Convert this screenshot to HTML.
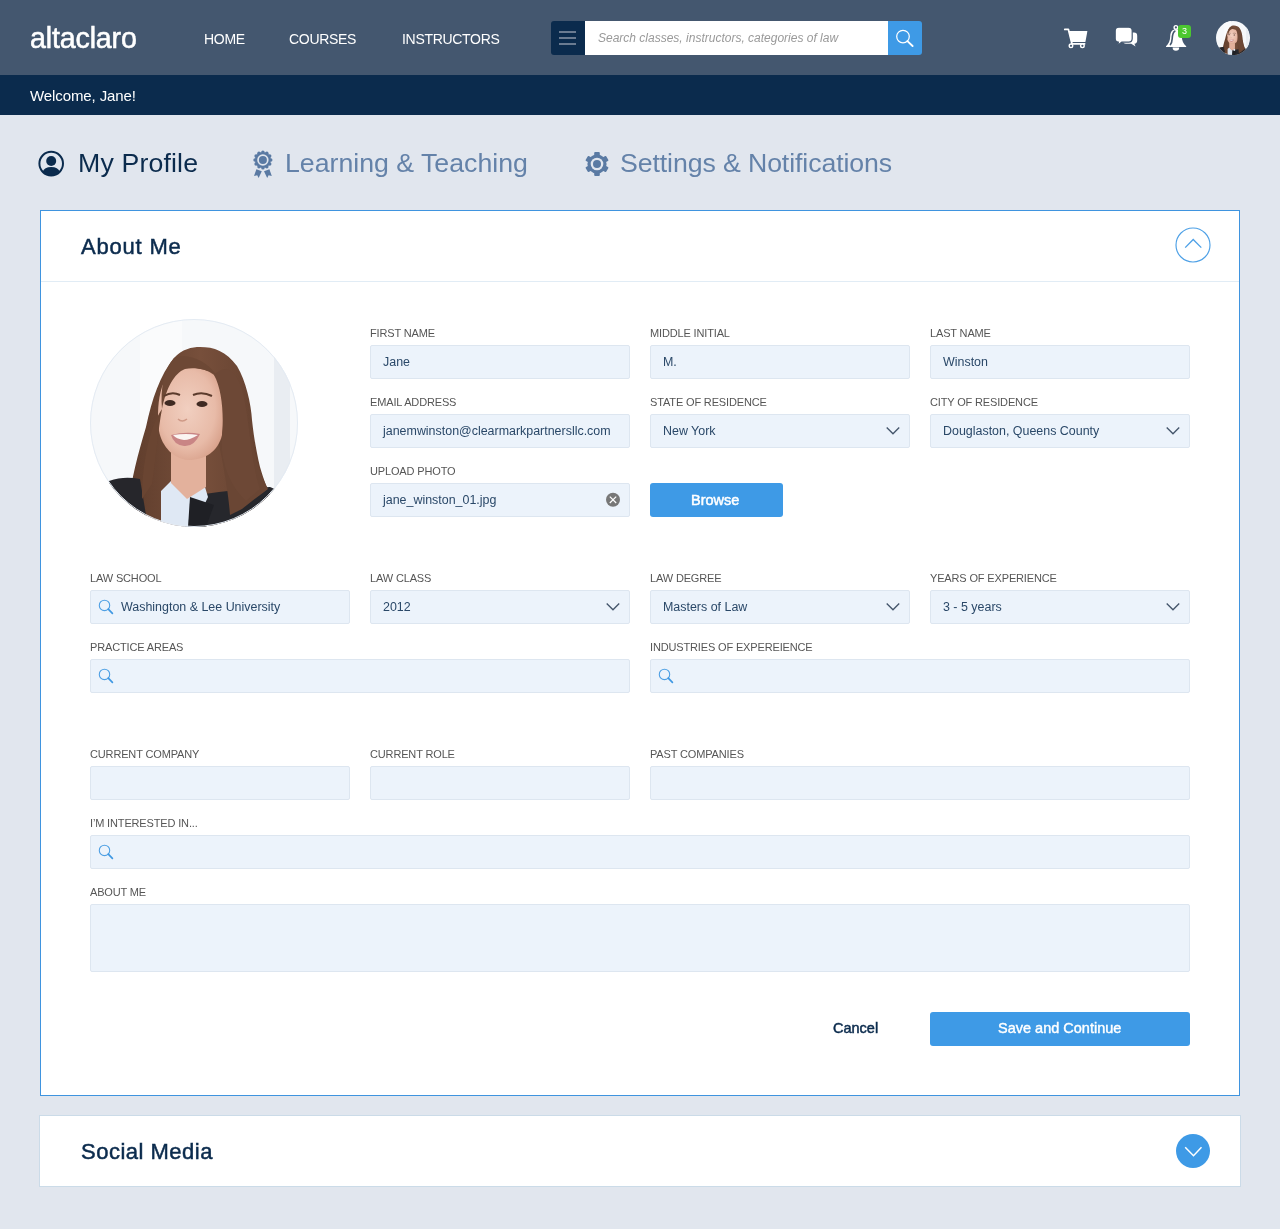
<!DOCTYPE html>
<html><head><meta charset="utf-8"><title>altaclaro - My Profile</title>
<style>
html,body{margin:0;padding:0;}
body{width:1280px;height:1229px;background:#e1e6ee;position:relative;overflow:hidden;font-family:'Liberation Sans', sans-serif;}
.t{position:absolute;will-change:transform;line-height:1;white-space:nowrap;font-family:'Liberation Sans', sans-serif;}
.r{position:absolute;display:block;}
</style></head><body>
<div class="r" style="left:0px;top:0px;width:1280px;height:75px;background:#44576f"></div>
<div class="r" style="left:0px;top:75px;width:1280px;height:40px;background:#0b2b4d"></div>
<div class="t" style="left:30px;top:23.69px;font-size:28.6px;color:#fff;font-weight:normal;letter-spacing:-0.15px;-webkit-text-stroke:0.55px #fff">altaclaro</div>
<div class="t" style="left:203.5px;top:32.10px;font-size:14px;color:#fff;font-weight:normal;letter-spacing:-0.3px">HOME</div>
<div class="t" style="left:289px;top:32.10px;font-size:14px;color:#fff;font-weight:normal;letter-spacing:-0.3px">COURSES</div>
<div class="t" style="left:401.5px;top:32.10px;font-size:14px;color:#fff;font-weight:normal;letter-spacing:-0.3px">INSTRUCTORS</div>
<div class="t" style="left:30px;top:88.05px;font-size:15px;color:#fff;font-weight:normal;letter-spacing:-0.1px">Welcome, Jane!</div>
<div class="r" style="left:551px;top:21px;width:34px;height:34px;background:#0b2b4d;border-radius:3px 0 0 3px"></div>
<div class="r" style="left:559px;top:31px;width:17px;height:2px;background:#6a7b91"></div>
<div class="r" style="left:559px;top:37px;width:17px;height:2px;background:#6a7b91"></div>
<div class="r" style="left:559px;top:43px;width:17px;height:2px;background:#6a7b91"></div>
<div class="r" style="left:585px;top:21px;width:303px;height:34px;background:#fff"></div>
<div class="t" style="left:598px;top:32.20px;font-size:12px;color:#999999;font-weight:normal;font-style:italic">Search classes, instructors, categories of law</div>
<div class="r" style="left:888px;top:21px;width:34px;height:34px;background:#3e9ae6;border-radius:0 3px 3px 0"></div>
<svg class="r" style="left:888px;top:21px;" width="34" height="34" viewBox="0 0 34 34"><circle cx="15" cy="15.6" r="6.3" fill="none" stroke="#fff" stroke-width="1.25"/><line x1="19.4" y1="20.1" x2="24.6" y2="25" stroke="#fff" stroke-width="1.9" stroke-linecap="round"/></svg>
<svg class="r" style="left:0px;top:0px;" width="1280" height="75" viewBox="0 0 1280 75">
<path d="M1064.8 29.4 H1068.4 L1072 43.8 H1084.6" fill="none" stroke="#fff" stroke-width="1.8" stroke-linejoin="round" stroke-linecap="round"/>
<path d="M1068.6 31 H1087.4 L1085.4 42 H1071.2 Z" fill="#fff"/>
<circle cx="1071" cy="45.8" r="1.8" fill="#44576f" stroke="#fff" stroke-width="1.4"/>
<circle cx="1082.4" cy="45.8" r="1.8" fill="#44576f" stroke="#fff" stroke-width="1.4"/>
<path d="M1127.5 32.5 H1134 Q1137.2 32.5 1137.2 35.7 V40.5 Q1137.2 43.5 1134.4 43.7 L1135.6 46.6 L1131.2 43.8 H1126 Q1123 43.8 1123 40.8 V35.7 Q1123 32.5 1126.2 32.5 Z" fill="#fff"/>
<path d="M1118.8 27.2 H1128.6 Q1132.2 27.2 1132.2 30.8 V38.6 Q1132.2 42.2 1128.6 42.2 H1121.8 L1117.6 45.2 L1118.4 42.2 Q1115.2 42 1115.2 38.6 V30.8 Q1115.2 27.2 1118.8 27.2 Z" fill="#fff" stroke="#44576f" stroke-width="1.2"/>
<circle cx="1175.9" cy="27.4" r="1.8" fill="none" stroke="#fff" stroke-width="1.4"/>
<path d="M1175.9 29.2 C1171.4 29.4 1170.4 32.5 1170.2 36.5 C1170 41 1168.8 43.6 1166 46.3 L1166 47 H1186.2 V46.3 C1183.2 43.6 1182 41 1181.8 36.5 C1181.6 32.5 1180.4 29.4 1175.9 29.2 Z" fill="#fff"/>
<path d="M1172.6 47.4 A3.3 3.3 0 0 0 1179.2 47.4 Z" fill="#fff"/>
<path d="M1174.8 31.2 C1172.8 32.2 1172.4 35 1172.2 38.6 C1172 41.6 1171.4 43.4 1170.4 44.6" fill="none" stroke="#44576f" stroke-width="1.6" stroke-linecap="round"/>
</svg>
<div class="r" style="left:1178px;top:25px;width:13px;height:13px;background:#4cc730;border-radius:3px"></div>
<div class="t" style="left:1182px;top:26.75px;font-size:9px;color:#fff;font-weight:normal;">3</div>
<svg class="r" style="left:1216px;top:21px" width="34" height="34" viewBox="0 0 208 208"><defs><clipPath id="ca"><circle cx="104" cy="104" r="104"/></clipPath></defs><g clip-path="url(#ca)"><defs><linearGradient id="hg" x1="0" y1="0" x2="1" y2="0"><stop offset="0" stop-color="#5f3d2c"/><stop offset="0.5" stop-color="#774f3b"/><stop offset="1" stop-color="#62402f"/></linearGradient>
<radialGradient id="sk" cx="0.45" cy="0.45" r="0.6"><stop offset="0" stop-color="#f1cfc0"/><stop offset="0.7" stop-color="#e8bba8"/><stop offset="1" stop-color="#d9a28c"/></radialGradient></defs>
<rect width="208" height="208" fill="#f6f8fa"/>
<rect x="50" y="0" width="42" height="208" fill="#fafbfc"/>
<rect x="184" y="0" width="16" height="208" fill="#e9edf2"/>
<path d="M39 208 L39 186 C41 160 48 135 56 108 C62 80 70 56 84 39 C92 30 102 28 110 28 C124 28 136 32 147 47 C156 62 161 85 162 101 C164 120 167 135 170 148 C174 162 178 172 182 178 L176 208 Z" fill="url(#hg)"/>
<path d="M19 162 C30 158 40 158 50 160 L58 208 L19 208 Z" fill="#26262b"/>
<path d="M95 178 C120 174 150 170 180 168 C190 172 198 180 208 190 L208 208 L95 208 Z" fill="#26272c"/>
<path d="M71 172 L81 162 L96 178 L115 168 L118 178 L104 208 L71 208 Z" fill="#dfe8f4"/>
<path d="M100 178 L124 186 L116 208 L98 208 Z" fill="#1f2025"/>
<path d="M128 120 C134 150 138 170 140 196 L152 190 C162 182 170 176 178 170 C170 155 166 140 162 120 Z" fill="#6a4634"/>
<path d="M81 128 L116 128 L116 168 L97 180 L81 164 Z" fill="#e3b19c"/>
<path d="M95 49 C110 48 126 52 131 66 C135 80 134 100 132 116 C128 132 116 141 98 141 C84 140 72 128 69 112 C67 96 68 80 72 68 C76 56 84 50 95 49 Z" fill="url(#sk)"/>
<path d="M84 39 C96 34 116 40 126 56 C118 50 104 48 95 50 C84 54 76 70 72 90 C70 70 74 50 84 39 Z" fill="#6d4835"/>
<path d="M124 56 C132 70 134 95 132 118 C130 140 138 165 156 182 L170 170 C160 140 160 100 152 70 C146 52 136 44 124 56 Z" fill="#6d4836"/>
<path d="M72 90 C68 110 66 140 62 165 L52 180 C52 150 58 110 72 90 Z" fill="#6a4532"/>
<path d="M74 77 Q82 72 90 76" fill="none" stroke="#5b3b2c" stroke-width="2"/><path d="M103 76 Q112 72 122 77" fill="none" stroke="#5b3b2c" stroke-width="2"/>
<ellipse cx="80" cy="84" rx="5.5" ry="3" fill="#3f2a22"/><ellipse cx="112" cy="85" rx="5.5" ry="3" fill="#3f2a22"/>
<path d="M88 100 Q92 104 97 100" fill="none" stroke="#cf9a87" stroke-width="1.5"/>
<path d="M81 116 Q96 112 110 115 Q104 128 94 127 Q84 126 81 116 Z" fill="#c98585"/>
<path d="M83 116 Q96 114 108 116 Q100 121 94 121 Q86 120 83 116 Z" fill="#fbf5f2"/></g></svg>
<svg class="r" style="left:37px;top:150px;" width="28" height="28" viewBox="0 0 28 28"><circle cx="14.2" cy="13.6" r="11.8" fill="none" stroke="#0b2b4d" stroke-width="2"/><circle cx="14.2" cy="11" r="5" fill="#0b2b4d"/><path d="M5.6 21.8 C6.8 18.4 9.6 16.9 14.2 16.9 C18.8 16.9 21.6 18.4 22.8 21.8 C20.6 24.2 17.6 25.4 14.2 25.4 C10.8 25.4 7.8 24.2 5.6 21.8 Z" fill="#0b2b4d"/></svg>
<div class="t" style="left:78px;top:150.21px;font-size:26.7px;color:#0b2b4d;font-weight:normal;letter-spacing:0.15px">My Profile</div>
<svg class="r" style="left:245px;top:145px;" width="36" height="36" viewBox="0 0 36 36"><circle cx="17.9" cy="15" r="8" fill="#5a7aa3"/><circle cx="25.80" cy="15.00" r="1.7" fill="#5a7aa3"/><circle cx="24.74" cy="18.95" r="1.7" fill="#5a7aa3"/><circle cx="21.85" cy="21.84" r="1.7" fill="#5a7aa3"/><circle cx="17.90" cy="22.90" r="1.7" fill="#5a7aa3"/><circle cx="13.95" cy="21.84" r="1.7" fill="#5a7aa3"/><circle cx="11.06" cy="18.95" r="1.7" fill="#5a7aa3"/><circle cx="10.00" cy="15.00" r="1.7" fill="#5a7aa3"/><circle cx="11.06" cy="11.05" r="1.7" fill="#5a7aa3"/><circle cx="13.95" cy="8.16" r="1.7" fill="#5a7aa3"/><circle cx="17.90" cy="7.10" r="1.7" fill="#5a7aa3"/><circle cx="21.85" cy="8.16" r="1.7" fill="#5a7aa3"/><circle cx="24.74" cy="11.05" r="1.7" fill="#5a7aa3"/><circle cx="17.9" cy="15" r="5.7" fill="#e1e6ee"/><circle cx="17.9" cy="15" r="4" fill="#5a7aa3"/><path d="M11.4 24.2 L16.8 26.3 L13.6 33 L12.2 30.3 L9 31 Z" fill="#5a7aa3"/><path d="M24.4 24.2 L19 26.3 L22.2 33 L23.6 30.3 L26.8 31 Z" fill="#5a7aa3"/></svg>
<div class="t" style="left:284.5px;top:150.21px;font-size:26.7px;color:#6482a9;font-weight:normal;">Learning &amp; Teaching</div>
<svg class="r" style="left:577px;top:144px;" width="40" height="40" viewBox="0 0 40 40"><rect x="17.2" y="8.1" width="5.6" height="5" rx="0.9" fill="#5a7aa3" transform="rotate(0 20 20)"/><rect x="17.2" y="8.1" width="5.6" height="5" rx="0.9" fill="#5a7aa3" transform="rotate(60 20 20)"/><rect x="17.2" y="8.1" width="5.6" height="5" rx="0.9" fill="#5a7aa3" transform="rotate(120 20 20)"/><rect x="17.2" y="8.1" width="5.6" height="5" rx="0.9" fill="#5a7aa3" transform="rotate(180 20 20)"/><rect x="17.2" y="8.1" width="5.6" height="5" rx="0.9" fill="#5a7aa3" transform="rotate(240 20 20)"/><rect x="17.2" y="8.1" width="5.6" height="5" rx="0.9" fill="#5a7aa3" transform="rotate(300 20 20)"/><circle cx="20" cy="20" r="9.6" fill="#5a7aa3"/><circle cx="20" cy="20" r="6.3" fill="#e1e6ee"/><circle cx="20" cy="20" r="4" fill="#5a7aa3"/></svg>
<div class="t" style="left:619.5px;top:150.21px;font-size:26.7px;color:#6482a9;font-weight:normal;letter-spacing:-0.1px">Settings &amp; Notifications</div>
<div class="r" style="left:40px;top:210px;width:1198px;height:884px;background:#fff;border:1px solid #3f94df"></div>
<div class="r" style="left:41px;top:281px;width:1198px;height:1px;background:#e1ecf5"></div>
<div class="t" style="left:81.3px;top:236.00px;font-size:22px;color:#0b2b4d;font-weight:normal;letter-spacing:0.8px;-webkit-text-stroke:0.5px #0b2b4d">About Me</div>
<svg class="r" style="left:1175px;top:227px;" width="36" height="36" viewBox="0 0 36 36"><circle cx="18" cy="18" r="17" fill="none" stroke="#4da0e6" stroke-width="1.15"/><path d="M10.2 20.6 L18.2 12.5 L26.3 20.6" fill="none" stroke="#4da0e6" stroke-width="1.3"/></svg>
<svg class="r" style="left:90px;top:319px" width="208" height="208" viewBox="0 0 208 208"><defs><clipPath id="cb"><circle cx="104" cy="104" r="104"/></clipPath></defs><g clip-path="url(#cb)"><defs><linearGradient id="hg2" x1="0" y1="0" x2="1" y2="0"><stop offset="0" stop-color="#5f3d2c"/><stop offset="0.5" stop-color="#774f3b"/><stop offset="1" stop-color="#62402f"/></linearGradient>
<radialGradient id="sk2" cx="0.45" cy="0.45" r="0.6"><stop offset="0" stop-color="#f1cfc0"/><stop offset="0.7" stop-color="#e8bba8"/><stop offset="1" stop-color="#d9a28c"/></radialGradient></defs>
<rect width="208" height="208" fill="#f6f8fa"/>
<rect x="50" y="0" width="42" height="208" fill="#fafbfc"/>
<rect x="184" y="0" width="16" height="208" fill="#e9edf2"/>
<path d="M39 208 L39 186 C41 160 48 135 56 108 C62 80 70 56 84 39 C92 30 102 28 110 28 C124 28 136 32 147 47 C156 62 161 85 162 101 C164 120 167 135 170 148 C174 162 178 172 182 178 L176 208 Z" fill="url(#hg2)"/>
<path d="M19 162 C30 158 40 158 50 160 L58 208 L19 208 Z" fill="#26262b"/>
<path d="M95 178 C120 174 150 170 180 168 C190 172 198 180 208 190 L208 208 L95 208 Z" fill="#26272c"/>
<path d="M71 172 L81 162 L96 178 L115 168 L118 178 L104 208 L71 208 Z" fill="#dfe8f4"/>
<path d="M100 178 L124 186 L116 208 L98 208 Z" fill="#1f2025"/>
<path d="M128 120 C134 150 138 170 140 196 L152 190 C162 182 170 176 178 170 C170 155 166 140 162 120 Z" fill="#6a4634"/>
<path d="M81 128 L116 128 L116 168 L97 180 L81 164 Z" fill="#e3b19c"/>
<path d="M95 49 C110 48 126 52 131 66 C135 80 134 100 132 116 C128 132 116 141 98 141 C84 140 72 128 69 112 C67 96 68 80 72 68 C76 56 84 50 95 49 Z" fill="url(#sk2)"/>
<path d="M84 39 C96 34 116 40 126 56 C118 50 104 48 95 50 C84 54 76 70 72 90 C70 70 74 50 84 39 Z" fill="#6d4835"/>
<path d="M124 56 C132 70 134 95 132 118 C130 140 138 165 156 182 L170 170 C160 140 160 100 152 70 C146 52 136 44 124 56 Z" fill="#6d4836"/>
<path d="M72 90 C68 110 66 140 62 165 L52 180 C52 150 58 110 72 90 Z" fill="#6a4532"/>
<path d="M74 77 Q82 72 90 76" fill="none" stroke="#5b3b2c" stroke-width="2"/><path d="M103 76 Q112 72 122 77" fill="none" stroke="#5b3b2c" stroke-width="2"/>
<ellipse cx="80" cy="84" rx="5.5" ry="3" fill="#3f2a22"/><ellipse cx="112" cy="85" rx="5.5" ry="3" fill="#3f2a22"/>
<path d="M88 100 Q92 104 97 100" fill="none" stroke="#cf9a87" stroke-width="1.5"/>
<path d="M81 116 Q96 112 110 115 Q104 128 94 127 Q84 126 81 116 Z" fill="#c98585"/>
<path d="M83 116 Q96 114 108 116 Q100 121 94 121 Q86 120 83 116 Z" fill="#fbf5f2"/></g><circle cx="104" cy="104" r="103.5" fill="none" stroke="#e4ebf3" stroke-width="1"/></svg>
<div class="t" style="left:370px;top:327.65px;font-size:11px;color:#565656;font-weight:normal;letter-spacing:-0.15px">FIRST NAME</div>
<div class="r" style="left:370px;top:345px;width:258px;height:32px;background:#ecf3fb;border:1px solid #dde6f0;border-radius:2px"></div>
<div class="t" style="left:383px;top:356.22px;font-size:12.45px;color:#2a4868;font-weight:normal;">Jane</div>
<div class="t" style="left:650px;top:327.65px;font-size:11px;color:#565656;font-weight:normal;letter-spacing:-0.15px">MIDDLE INITIAL</div>
<div class="r" style="left:650px;top:345px;width:258px;height:32px;background:#ecf3fb;border:1px solid #dde6f0;border-radius:2px"></div>
<div class="t" style="left:663px;top:356.22px;font-size:12.45px;color:#2a4868;font-weight:normal;">M.</div>
<div class="t" style="left:930px;top:327.65px;font-size:11px;color:#565656;font-weight:normal;letter-spacing:-0.15px">LAST NAME</div>
<div class="r" style="left:930px;top:345px;width:258px;height:32px;background:#ecf3fb;border:1px solid #dde6f0;border-radius:2px"></div>
<div class="t" style="left:943px;top:356.22px;font-size:12.45px;color:#2a4868;font-weight:normal;">Winston</div>
<div class="t" style="left:370px;top:396.65px;font-size:11px;color:#565656;font-weight:normal;letter-spacing:-0.15px">EMAIL ADDRESS</div>
<div class="r" style="left:370px;top:414px;width:258px;height:32px;background:#ecf3fb;border:1px solid #dde6f0;border-radius:2px"></div>
<div class="t" style="left:383px;top:425.22px;font-size:12.45px;color:#2a4868;font-weight:normal;">janemwinston@clearmarkpartnersllc.com</div>
<div class="t" style="left:650px;top:396.65px;font-size:11px;color:#565656;font-weight:normal;letter-spacing:-0.15px">STATE OF RESIDENCE</div>
<div class="r" style="left:650px;top:414px;width:258px;height:32px;background:#ecf3fb;border:1px solid #dde6f0;border-radius:2px"></div>
<div class="t" style="left:663px;top:425.22px;font-size:12.45px;color:#2a4868;font-weight:normal;">New York</div>
<svg class="r" style="left:880px;top:424px;" width="24" height="14" viewBox="0 0 24 14"><path d="M6.7 3.4 L13 9.7 L19.2 3.6" fill="none" stroke="#44556b" stroke-width="1.35"/></svg>
<div class="t" style="left:930px;top:396.65px;font-size:11px;color:#565656;font-weight:normal;letter-spacing:-0.15px">CITY OF RESIDENCE</div>
<div class="r" style="left:930px;top:414px;width:258px;height:32px;background:#ecf3fb;border:1px solid #dde6f0;border-radius:2px"></div>
<div class="t" style="left:943px;top:425.22px;font-size:12.45px;color:#2a4868;font-weight:normal;">Douglaston, Queens County</div>
<svg class="r" style="left:1160px;top:424px;" width="24" height="14" viewBox="0 0 24 14"><path d="M6.7 3.4 L13 9.7 L19.2 3.6" fill="none" stroke="#44556b" stroke-width="1.35"/></svg>
<div class="t" style="left:370px;top:465.65px;font-size:11px;color:#565656;font-weight:normal;letter-spacing:-0.15px">UPLOAD PHOTO</div>
<div class="r" style="left:370px;top:483px;width:258px;height:32px;background:#ecf3fb;border:1px solid #dde6f0;border-radius:2px"></div>
<div class="t" style="left:383px;top:494.22px;font-size:12.45px;color:#2a4868;font-weight:normal;">jane_winston_01.jpg</div>
<svg class="r" style="left:606px;top:492px;" width="16" height="16" viewBox="0 0 16 16"><circle cx="7" cy="7.8" r="7" fill="#777777"/><path d="M3.8 4.6 L10.2 11 M10.2 4.6 L3.8 11" stroke="#fff" stroke-width="1.2"/></svg>
<div class="r" style="left:650px;top:483px;width:133px;height:34px;background:#3e9ae6;border-radius:3px"></div>
<div class="t" style="left:690.5px;top:492.68px;font-size:14.5px;color:#fff;font-weight:normal;-webkit-text-stroke:0.5px #fff">Browse</div>
<div class="t" style="left:90px;top:572.65px;font-size:11px;color:#565656;font-weight:normal;letter-spacing:-0.15px">LAW SCHOOL</div>
<div class="r" style="left:90px;top:590px;width:258px;height:32px;background:#ecf3fb;border:1px solid #dde6f0;border-radius:2px"></div>
<svg class="r" style="left:95px;top:595px;" width="24" height="24" viewBox="0 0 24 24"><circle cx="9.5" cy="10.4" r="5.2" fill="none" stroke="#4fa0e4" stroke-width="1.1"/><line x1="13.3" y1="14.2" x2="17.4" y2="18.3" stroke="#3f98e2" stroke-width="1.7" stroke-linecap="round"/></svg>
<div class="t" style="left:121px;top:601.22px;font-size:12.45px;color:#2a4868;font-weight:normal;">Washington &amp; Lee University</div>
<div class="t" style="left:370px;top:572.65px;font-size:11px;color:#565656;font-weight:normal;letter-spacing:-0.15px">LAW CLASS</div>
<div class="r" style="left:370px;top:590px;width:258px;height:32px;background:#ecf3fb;border:1px solid #dde6f0;border-radius:2px"></div>
<div class="t" style="left:383px;top:601.22px;font-size:12.45px;color:#2a4868;font-weight:normal;">2012</div>
<svg class="r" style="left:600px;top:600px;" width="24" height="14" viewBox="0 0 24 14"><path d="M6.7 3.4 L13 9.7 L19.2 3.6" fill="none" stroke="#44556b" stroke-width="1.35"/></svg>
<div class="t" style="left:650px;top:572.65px;font-size:11px;color:#565656;font-weight:normal;letter-spacing:-0.15px">LAW DEGREE</div>
<div class="r" style="left:650px;top:590px;width:258px;height:32px;background:#ecf3fb;border:1px solid #dde6f0;border-radius:2px"></div>
<div class="t" style="left:663px;top:601.22px;font-size:12.45px;color:#2a4868;font-weight:normal;">Masters of Law</div>
<svg class="r" style="left:880px;top:600px;" width="24" height="14" viewBox="0 0 24 14"><path d="M6.7 3.4 L13 9.7 L19.2 3.6" fill="none" stroke="#44556b" stroke-width="1.35"/></svg>
<div class="t" style="left:930px;top:572.65px;font-size:11px;color:#565656;font-weight:normal;letter-spacing:-0.15px">YEARS OF EXPERIENCE</div>
<div class="r" style="left:930px;top:590px;width:258px;height:32px;background:#ecf3fb;border:1px solid #dde6f0;border-radius:2px"></div>
<div class="t" style="left:943px;top:601.22px;font-size:12.45px;color:#2a4868;font-weight:normal;">3 - 5 years</div>
<svg class="r" style="left:1160px;top:600px;" width="24" height="14" viewBox="0 0 24 14"><path d="M6.7 3.4 L13 9.7 L19.2 3.6" fill="none" stroke="#44556b" stroke-width="1.35"/></svg>
<div class="t" style="left:90px;top:641.65px;font-size:11px;color:#565656;font-weight:normal;letter-spacing:-0.15px">PRACTICE AREAS</div>
<div class="r" style="left:90px;top:659px;width:538px;height:32px;background:#ecf3fb;border:1px solid #dde6f0;border-radius:2px"></div>
<svg class="r" style="left:95px;top:664px;" width="24" height="24" viewBox="0 0 24 24"><circle cx="9.5" cy="10.4" r="5.2" fill="none" stroke="#4fa0e4" stroke-width="1.1"/><line x1="13.3" y1="14.2" x2="17.4" y2="18.3" stroke="#3f98e2" stroke-width="1.7" stroke-linecap="round"/></svg>
<div class="t" style="left:650px;top:641.65px;font-size:11px;color:#565656;font-weight:normal;letter-spacing:-0.15px">INDUSTRIES OF EXPEREIENCE</div>
<div class="r" style="left:650px;top:659px;width:538px;height:32px;background:#ecf3fb;border:1px solid #dde6f0;border-radius:2px"></div>
<svg class="r" style="left:655px;top:664px;" width="24" height="24" viewBox="0 0 24 24"><circle cx="9.5" cy="10.4" r="5.2" fill="none" stroke="#4fa0e4" stroke-width="1.1"/><line x1="13.3" y1="14.2" x2="17.4" y2="18.3" stroke="#3f98e2" stroke-width="1.7" stroke-linecap="round"/></svg>
<div class="t" style="left:90px;top:748.65px;font-size:11px;color:#565656;font-weight:normal;letter-spacing:-0.15px">CURRENT COMPANY</div>
<div class="r" style="left:90px;top:766px;width:258px;height:32px;background:#ecf3fb;border:1px solid #dde6f0;border-radius:2px"></div>
<div class="t" style="left:370px;top:748.65px;font-size:11px;color:#565656;font-weight:normal;letter-spacing:-0.15px">CURRENT ROLE</div>
<div class="r" style="left:370px;top:766px;width:258px;height:32px;background:#ecf3fb;border:1px solid #dde6f0;border-radius:2px"></div>
<div class="t" style="left:650px;top:748.65px;font-size:11px;color:#565656;font-weight:normal;letter-spacing:-0.15px">PAST COMPANIES</div>
<div class="r" style="left:650px;top:766px;width:538px;height:32px;background:#ecf3fb;border:1px solid #dde6f0;border-radius:2px"></div>
<div class="t" style="left:90px;top:817.65px;font-size:11px;color:#565656;font-weight:normal;letter-spacing:-0.15px">I&#8217;M INTERESTED IN...</div>
<div class="r" style="left:90px;top:835px;width:1098px;height:32px;background:#ecf3fb;border:1px solid #dde6f0;border-radius:2px"></div>
<svg class="r" style="left:95px;top:840px;" width="24" height="24" viewBox="0 0 24 24"><circle cx="9.5" cy="10.4" r="5.2" fill="none" stroke="#4fa0e4" stroke-width="1.1"/><line x1="13.3" y1="14.2" x2="17.4" y2="18.3" stroke="#3f98e2" stroke-width="1.7" stroke-linecap="round"/></svg>
<div class="t" style="left:90px;top:886.65px;font-size:11px;color:#565656;font-weight:normal;letter-spacing:-0.15px">ABOUT ME</div>
<div class="r" style="left:90px;top:904px;width:1098px;height:66px;background:#ecf3fb;border:1px solid #dde6f0;border-radius:2px"></div>
<div class="t" style="left:833px;top:1020.88px;font-size:14.5px;color:#0b2b4d;font-weight:normal;-webkit-text-stroke:0.5px #0b2b4d">Cancel</div>
<div class="r" style="left:930px;top:1012px;width:260px;height:34px;background:#3e9ae6;border-radius:3px"></div>
<div class="t" style="left:997.5px;top:1020.97px;font-size:14.5px;color:#fff;font-weight:normal;-webkit-text-stroke:0.4px #fff">Save and Continue</div>
<div class="r" style="left:39px;top:1115px;width:1200px;height:70px;background:#fff;border:1px solid #cbdbe8"></div>
<div class="t" style="left:81.3px;top:1141.20px;font-size:22px;color:#0b2b4d;font-weight:normal;letter-spacing:0.5px;-webkit-text-stroke:0.5px #0b2b4d">Social Media</div>
<svg class="r" style="left:1176px;top:1134px;" width="34" height="34" viewBox="0 0 34 34"><circle cx="17" cy="17" r="17" fill="#3e9ae6"/><path d="M9.2 13.2 L17.5 21.7 L25.5 13.2" fill="none" stroke="#fff" stroke-width="1.5"/></svg>
</body></html>
